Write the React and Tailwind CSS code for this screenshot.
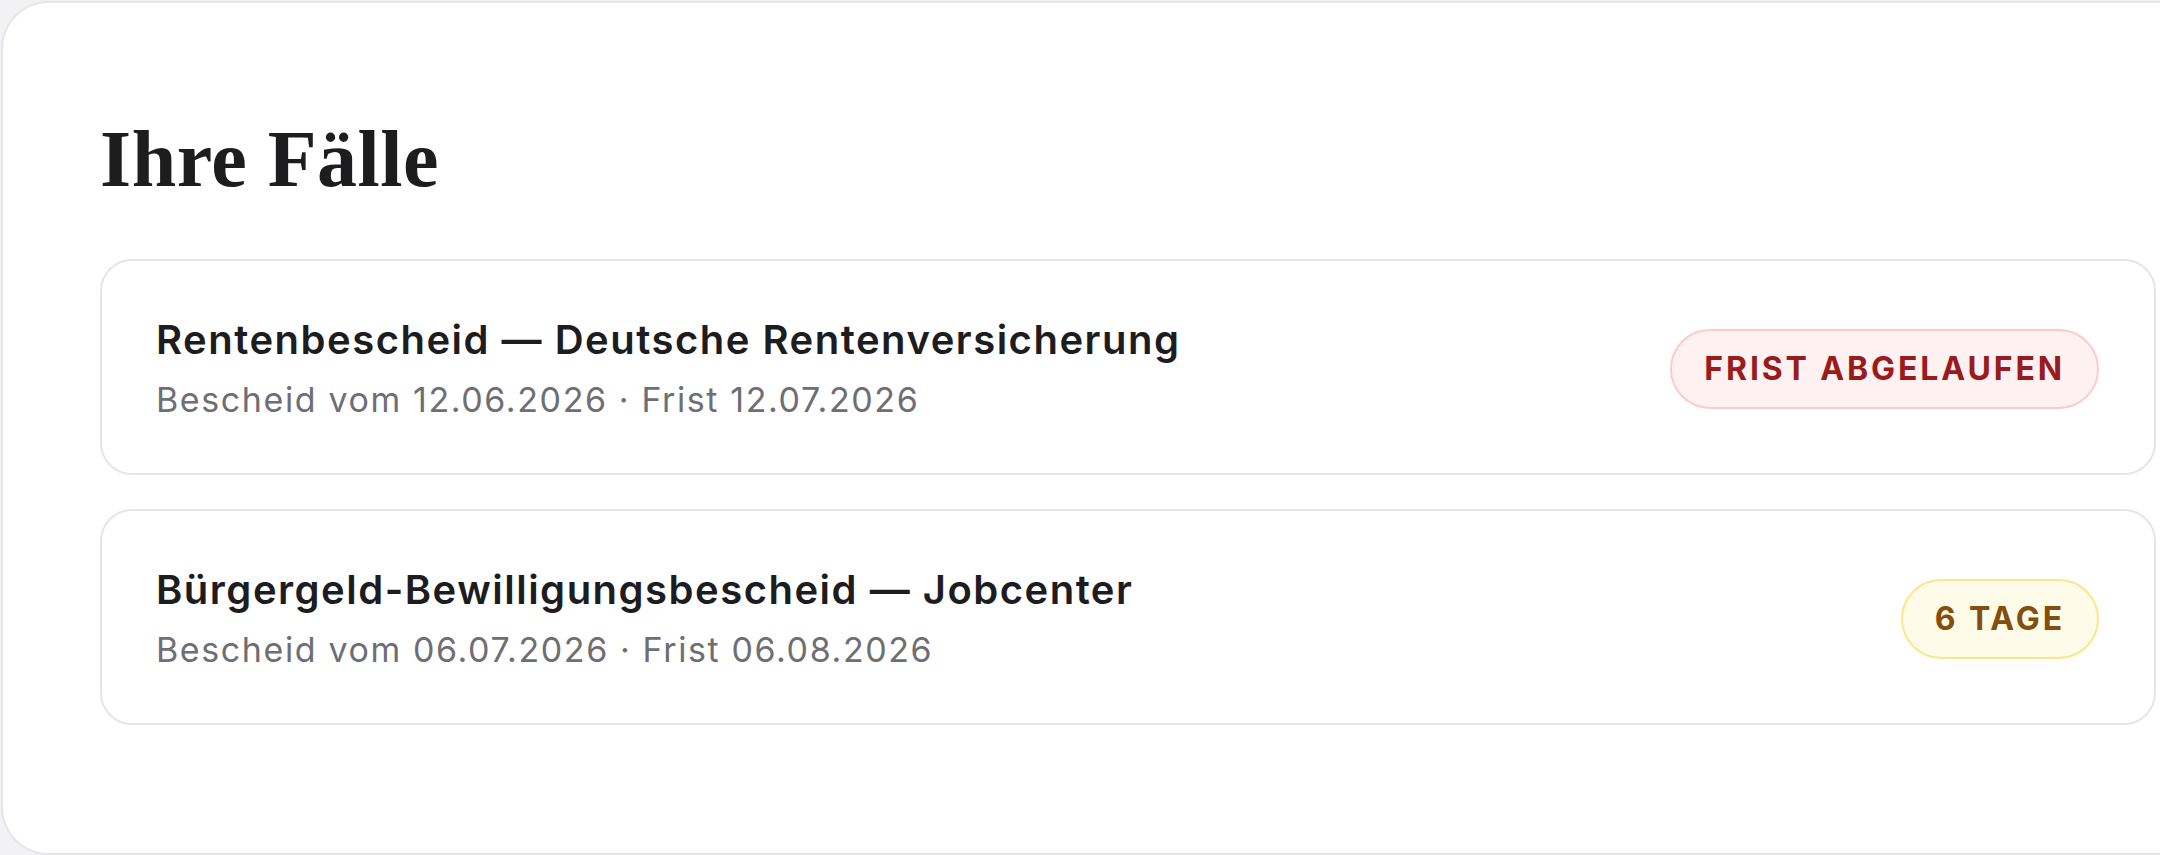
import React from "react";

const cases = [
  {
    id: 1,
    title: "Rentenbescheid — Deutsche Rentenversicherung",
    date: "12.06.2026",
    deadline: "12.07.2026",
    status: "expired",
    label: "Frist abgelaufen",
  },
  {
    id: 2,
    title: "Bürgergeld-Bewilligungsbescheid — Jobcenter",
    date: "06.07.2026",
    deadline: "06.08.2026",
    status: "soon",
    label: "6 Tage",
  },
];

function StatusBadge({ status, label }) {
  const styles =
    status === "expired"
      ? "bg-[#fef1f1] border-[#fecaca] text-[#991b1b]"
      : "bg-[#fefbe8] border-[#fde68a] text-[#854d0e]";

  return (
    <span
      className={`h-[80px] px-[32px] flex items-center rounded-full border-2 text-[32px] font-bold uppercase tracking-[0.09em] whitespace-nowrap ${styles}`}
    >
      {label}
    </span>
  );
}

function CaseCard({ item }) {
  return (
    <div className="w-full bg-white border-2 border-[#e5e5ea] rounded-[32px] pl-[54px] pr-[55px] pt-[53px] pb-[49px] flex items-center justify-between">
      <div className="flex flex-col">
        <h2 className="text-[40px] leading-[52px] font-semibold tracking-[1.5px] text-[#1d1d1f]">
          {item.title}
        </h2>
        <p className="mt-[10px] text-[34px] leading-[48px] tracking-[1.6px] text-[#6e6e73]">
          Bescheid vom {item.date} · Frist {item.deadline}
        </p>
      </div>
      <StatusBadge status={item.status} label={item.label} />
    </div>
  );
}

function App() {
  return (
    <div
      className="w-full h-[855px] bg-[#f2f2f4] pt-[1px] pl-[1px] overflow-hidden"
      style={{ fontFamily: "Inter, 'Noto Sans', sans-serif" }}
    >
      <div className="w-[2254px] h-[854px] bg-white border-2 border-[#e5e5ea] rounded-[48px] px-[97px] pt-[108px]">
        <h1
          className="text-[80px] leading-[96px] font-bold tracking-[0.5px] text-[#1d1d1f]"
          style={{ fontFamily: "'Liberation Serif', serif" }}
        >
          Ihre Fälle
        </h1>

        {/* Case list */}
        <div className="mt-[52px] flex flex-col gap-[34px]">
          {cases.map((item) => (
            <CaseCard key={item.id} item={item} />
          ))}
        </div>
      </div>
    </div>
  );
}

export default App;
